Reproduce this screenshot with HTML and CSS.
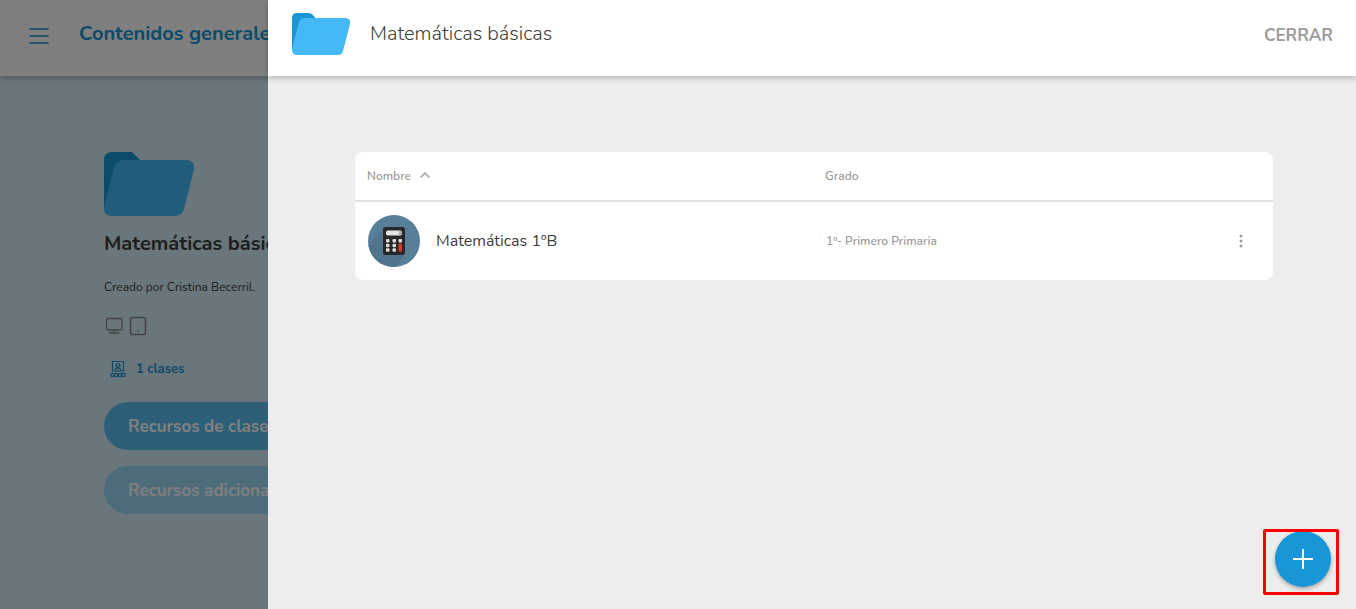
FILE: index.html
```html
<!DOCTYPE html>
<html lang="es">
<head>
<meta charset="utf-8">
<meta name="viewport" content="width=device-width, initial-scale=1">
<title>Matemáticas básicas</title>
<link rel="stylesheet" href="styles.css">
</head>
<body>
<div class="page">
  <header class="topbar">
    <button class="menu" type="button" aria-label="Menú">
      <svg width="20" height="16" viewBox="0 0 20 16" fill="none" stroke="currentColor" stroke-width="1.6" stroke-linecap="round"><path d="M1 1h18M1 8h18M1 15h18"/></svg>
    </button>
    <h1 class="topbar-title">Contenidos generales</h1>
  </header>
  <main class="detail">
    <svg class="cover" viewBox="0 0 90 64" aria-hidden="true"><path fill="#1896d5" d="M0 56V8Q0 0 8 0H28L36 8L20 40Z"/><path fill="#45b9f7" d="M1 52L10 15Q12 8 20 8H82Q91 8 90 17L80 57Q78 64 71 64H8Q0 64 0 57Z"/></svg>
    <h2 class="detail-title">Matemáticas básicas</h2>
    <p class="author">Creado por Cristina Becerril.</p>
    <div class="devices">
      <svg width="18" height="18" viewBox="0 0 18 18" fill="none" stroke="currentColor" stroke-width="1.3"><rect x="1.500" y="1.500" width="15.500" height="11.500" rx="1.500"/><path d="M9 13v3M4 16h10.500"/></svg>
      <svg width="18" height="20" viewBox="0 0 18 20" fill="none" stroke="currentColor" stroke-width="1.500"><rect x="1.500" y="1.500" width="15" height="17" rx="2"/><path d="M8.500 15h1.500"/></svg>
    </div>
    <a class="classes" href="#clases">
      <svg width="16" height="18" viewBox="0 0 16 18" fill="none" stroke="currentColor" stroke-width="1.200"><path d="M4 11H2.500V1.500h11V11H12"/><circle cx="8" cy="5.500" r="1.900"/><path d="M5 11c0-4 6-4 6 0Z"/><circle cx="2.500" cy="15" r="1.700"/><circle cx="6.200" cy="15" r="1.700"/><circle cx="9.900" cy="15" r="1.700"/><circle cx="13.500" cy="15" r="1.700"/></svg>
      <span>1 clases</span>
    </a>
    <div class="actions">
      <button class="pill" type="button">Recursos de clase</button>
      <button class="pill pill-soft" type="button">Recursos adicionales</button>
    </div>
  </main>
</div>
<div class="backdrop"></div>
<section class="drawer" role="dialog" aria-labelledby="drawer-title">
  <header class="drawer-head">
    <svg class="folder" viewBox="0 0 58 42" aria-hidden="true"><path fill="#1896d5" d="M0 37V5Q0 0 5 0H16Q19 0 21 2L24 6L12 28Z"/><path fill="#45b9f7" d="M0 36L7 9Q8 5 13 5H53Q59 5 58 11L51 38Q50 42 46 42H5Q0 42 0 37Z"/></svg>
    <h2 class="drawer-title" id="drawer-title">Matemáticas básicas</h2>
    <button class="close" type="button">CERRAR</button>
  </header>
  <div class="drawer-body">
    <table class="list">
      <thead>
        <tr>
          <th class="col-name" scope="col">Nombre <svg class="sort" width="10" height="6" viewBox="0 0 10 6" fill="none" stroke="currentColor" stroke-width="1.400" stroke-linecap="round" stroke-linejoin="round"><path d="M1 5l4-4 4 4"/></svg></th>
          <th scope="col">Grado</th>
          <th class="col-menu"></th>
        </tr>
      </thead>
      <tbody>
        <tr>
          <td>
            <div class="subject">
              <svg width="52" height="52" viewBox="0 0 52 52" aria-hidden="true">
                <defs><clipPath id="disc"><circle cx="26" cy="26" r="26"/></clipPath></defs>
                <g clip-path="url(#disc)"><path fill="#587f9a" d="M0 0h52v52H0z"/><path fill="#50748d" d="M16 14L0 30V52H28L37 38Z"/></g>
                <rect x="15" y="12" width="22" height="28" rx="2.500" fill="#282828"/>
                <rect x="18" y="15.500" width="16" height="5" rx="2" fill="#e4e4e4"/><path d="M31 15.500h1q2 0 2 2.500t-2 2.500h-1z" fill="#aaa"/>
                <g fill="#ddd"><rect x="18" y="24" width="3.500" height="3.500" rx="1"/><rect x="24.500" y="24" width="3.500" height="3.500" rx="1"/><rect x="30.500" y="24" width="3.500" height="3.500" rx="1"/><rect x="18" y="28.700" width="3.500" height="3.500" rx="1"/><rect x="24.500" y="28.700" width="3.500" height="3.500" rx="1"/><rect x="18" y="33.300" width="3.500" height="3.500" rx="1"/><rect x="24.500" y="33.300" width="3.500" height="3.500" rx="1"/></g>
                <rect x="30.500" y="28.500" width="3.500" height="8.300" rx="1" fill="#d9362e"/>
              </svg>
              <span>Matemáticas 1ºB</span>
            </div>
          </td>
          <td class="grade">1º- Primero Primaria</td>
          <td><button class="more" type="button" aria-label="Más opciones"><svg width="4" height="14" viewBox="0 0 4 14" fill="currentColor"><circle cx="2" cy="2" r="1.500"/><circle cx="2" cy="7" r="1.500"/><circle cx="2" cy="12" r="1.500"/></svg></button></td>
        </tr>
      </tbody>
    </table>
  </div>
  <button class="add" type="button" aria-label="Añadir"><svg width="20" height="20" viewBox="0 0 20 20" stroke="currentColor" stroke-width="2"><path d="M10 0v20M0 10h20"/></svg></button>
  <div class="highlight"></div>
</section>
</body>
</html>
```

FILE: styles.css
```css
* { box-sizing: border-box; }
html, body { height: 100%; }
body {
  margin: 0;
  overflow: hidden;
  background: #d2ecf6;
  color: #3c3c3c;
  font-family: Nunito, "Open Sans", sans-serif;
}
h1, h2, p { margin: 0; }
button { padding: 0; border: 0; background: none; color: inherit; font: inherit; cursor: pointer; }
svg { display: block; flex: none; }

.topbar {
  display: flex;
  align-items: center;
  gap: 30px;
  height: 76px;
  padding: 0 29px;
  background: #fff;
  color: #1896d5;
  box-shadow: 0 2px 6px rgba(0, 0, 0, .25);
}
.menu { padding-bottom: 4px; line-height: 0; }
.topbar-title { padding-bottom: 8px; font-size: 20px; font-weight: 700; line-height: 28px; white-space: nowrap; }

.detail { padding: 76px 104px; }
.cover { width: 90px; height: 64px; }
.detail-title { margin-top: 14px; font-size: 20px; font-weight: 700; line-height: 28px; white-space: nowrap; }
.author { margin-top: 20px; font-size: 12px; line-height: 18px; }
.devices { display: flex; align-items: center; gap: 6px; margin-top: 20px; padding-left: 1px; color: #888; }
.classes {
  display: flex;
  align-items: center;
  gap: 10px;
  margin-top: 24px;
  padding-left: 6px;
  color: #1896d5;
  font-size: 13px;
  font-weight: 700;
  line-height: 18px;
  text-decoration: none;
}
.actions { display: flex; flex-direction: column; align-items: flex-start; gap: 16px; margin-top: 24px; }
.pill {
  height: 48px;
  padding: 0 24px;
  border-radius: 24px;
  background: #5abef0;
  color: #fff;
  font-size: 17px;
  font-weight: 700;
  white-space: nowrap;
}
.pill-soft { background: #98d8f4; }

.backdrop { position: fixed; inset: 0; background: rgba(0, 0, 0, .5); }
.drawer {
  position: fixed;
  inset: 0 0 0 268px;
  display: flex;
  flex-direction: column;
  background: #ededed;
}
.drawer-head {
  display: flex;
  align-items: center;
  height: 76px;
  padding: 0 23px 8px 24px;
  background: #fff;
  box-shadow: 0 2px 6px rgba(0, 0, 0, .25);
}
.folder { width: 58px; height: 42px; }
.drawer-title { flex: 1; margin-left: 20px; font-size: 20px; font-weight: 300; line-height: 28px; }
.close { padding-top: 2px; color: #9b9b9b; font-size: 17px; font-weight: 700; }

.drawer-body { flex: 1; padding: 76px 83px 0 87px; }
.list {
  width: 100%;
  border-spacing: 0;
  table-layout: fixed;
  border-radius: 8px;
  background: #fff;
  color: #9b9b9b;
  font-size: 12px;
}
.list th {
  height: 50px;
  padding: 0 12px;
  border-bottom: 2px solid #e0e0e0;
  font-weight: 600;
  text-align: left;
}
.list td { height: 78px; padding: 0 13px; }
.list .grade { font-weight: 600; }
.col-name { width: 458px; }
.col-menu { width: 64px; }
.sort { display: inline-block; margin-left: 6px; vertical-align: 2px; }
.subject { display: flex; align-items: center; gap: 16px; color: #3c3c3c; font-size: 16px; }
.more { display: flex; align-items: center; justify-content: center; width: 38px; height: 38px; }

.add {
  position: absolute;
  right: 25px;
  bottom: 22px;
  display: flex;
  align-items: center;
  justify-content: center;
  width: 56px;
  height: 56px;
  border-radius: 50%;
  background: #1896d5;
  color: #fff;
  box-shadow: 0 2px 4px rgba(0, 0, 0, .3);
}
.highlight {
  position: absolute;
  right: 17px;
  bottom: 14px;
  width: 76px;
  height: 66px;
  border: 3px solid #f00;
  border-radius: 2px;
  pointer-events: none;
}
```
